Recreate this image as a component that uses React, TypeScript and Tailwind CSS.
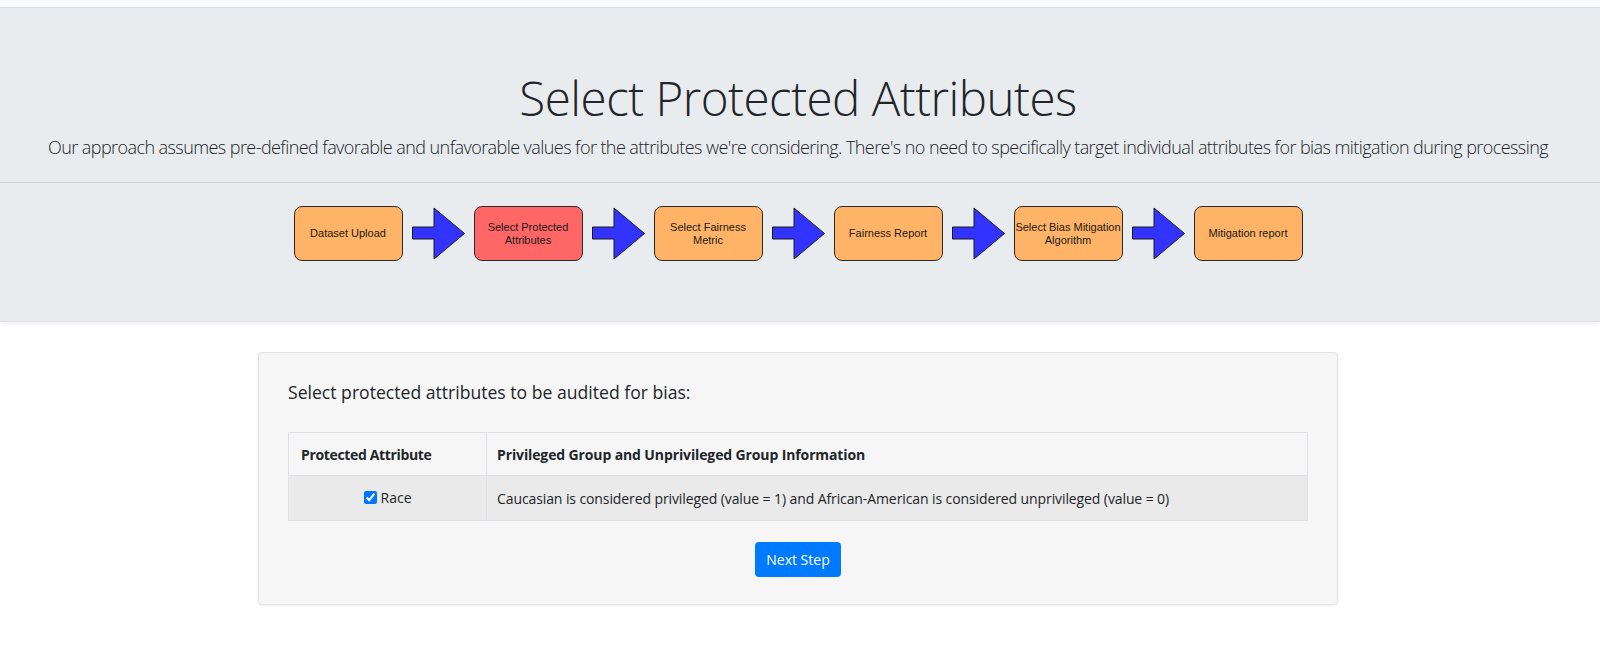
import React from "react";

const steps = [
  { label: ["Dataset Upload"], active: false },
  { label: ["Select Protected", "Attributes"], active: true },
  { label: ["Select Fairness", "Metric"], active: false },
  { label: ["Fairness Report"], active: false },
  { label: ["Select Bias Mitigation", "Algorithm"], active: false },
  { label: ["Mitigation report"], active: false },
];

function Arrow() {
  return (
    <svg width="53" height="55" viewBox="0 0 53 55" className="shrink-0">
      <polygon
        points="0.5,21 22,21 22,2 52.5,27.5 22,53 22,33 0.5,33"
        fill="#3333ff"
        stroke="#1a1a1a"
        strokeWidth="1"
        strokeLinejoin="miter"
      />
    </svg>
  );
}

function Step({ label, active }: { label: string[]; active: boolean }) {
  return (
    <div
      className={
        "w-[109px] h-[55px] shrink-0 rounded-[8px] border border-[#2a2a2a] flex flex-col items-center justify-center text-center text-[11px] leading-[13px] text-[#1a1a1a] " +
        (active ? "bg-[#ff6666]" : "bg-[#ffb366]")
      }
      style={{ fontFamily: '"Liberation Sans", Arial, sans-serif' }}
    >
      {label.map((l) => (
        <span key={l} className="whitespace-nowrap">
          {l}
        </span>
      ))}
    </div>
  );
}

export default function App() {
  return (
    <div
      className="min-h-[662px] bg-white text-[#212529]"
      style={{ fontFamily: '"Open Sans", "Noto Sans", sans-serif' }}
    >
      <div className="h-[8px] bg-[#f8f9fa] border-b border-[#dadde0]" />
      <div className="bg-[#e9ecef] border-b border-[#dee2e6] shadow-[0_2px_4px_rgba(0,0,0,0.06)]">
        <div className="pt-[60px] pb-[4px] pr-[4px] text-center">
          <h1 className="text-[47.5px] font-light leading-[60px] tracking-[-0.5px] text-[#212529]">
            Select Protected Attributes
          </h1>
          <p className="mt-[4px] text-[18px] font-light leading-[30px] tracking-[-0.57px] text-[#212529]">
            Our approach assumes pre-defined favorable and unfavorable values for the attributes we're considering. There's no need to specifically target individual attributes for bias mitigation during processing
          </p>
        </div>
        <div className="mt-[16px] border-t border-[#cfd3d7]" />
        <div className="pt-[23px] pb-[60px] pr-[4px] flex justify-center">
          <div className="flex items-center gap-[9px]">
            {steps.map((s, i) => (
              <React.Fragment key={i}>
                {i > 0 && <Arrow />}
                <Step label={s.label} active={s.active} />
              </React.Fragment>
            ))}
          </div>
        </div>
      </div>

      <div className="pt-[30px] pr-[4px] flex justify-center">
        <div className="w-[1080px] bg-[#f6f6f6] border border-[#e3e3e3] rounded-[4px] shadow-[0_1px_3px_rgba(0,0,0,0.08)] px-[29px] pt-[26px] pb-[27px]">
          <h5 className="text-[17.6px] font-medium leading-[27px] text-[#212529]">
            Select protected attributes to be audited for bias:
          </h5>
          <table className="mt-[26px] w-full border-collapse text-[14px] text-[#212529]">
            <thead>
              <tr>
                <th className="w-[198px] border border-[#dee2e6] px-[12px] h-[43px] text-left font-bold tracking-[-0.35px]">
                  Protected Attribute
                </th>
                <th className="border border-[#dee2e6] px-[10px] h-[43px] text-left font-bold tracking-[-0.12px]">
                  Privileged Group and Unprivileged Group Information
                </th>
              </tr>
            </thead>
            <tbody>
              <tr className="bg-[#eaeaea]">
                <td className="border border-[#dee2e6] h-[45px] text-center">
                  <label className="inline-flex items-center gap-[4px]">
                    <input type="checkbox" checked readOnly className="w-[13px] h-[13px] accent-[#0075ff]" />
                    <span>Race</span>
                  </label>
                </td>
                <td className="border border-[#dee2e6] px-[10px] h-[45px] tracking-[-0.1px]">
                  Caucasian is considered privileged (value = 1) and African-American is considered unprivileged (value = 0)
                </td>
              </tr>
            </tbody>
          </table>
          <div className="mt-[21px] flex justify-center">
            <button className="h-[35px] px-[11px] rounded-[4px] bg-[#007bff] text-white text-[14px] leading-[21px]">
              Next Step
            </button>
          </div>
        </div>
      </div>
    </div>
  );
}
